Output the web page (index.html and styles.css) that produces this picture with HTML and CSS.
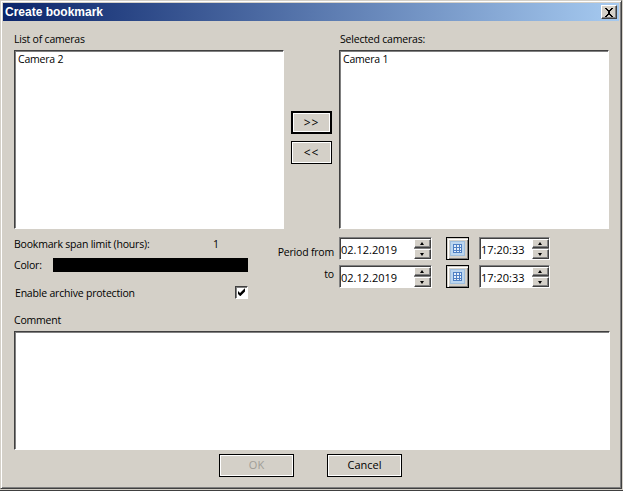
FILE: index.html
```html
<!DOCTYPE html>
<html lang="en">
<head>
<meta charset="utf-8">
<title>Create bookmark</title>
<link rel="stylesheet" href="styles.css">
</head>
<body>
<div class="window">
  <div class="frame">
    <header class="titlebar">
      <span class="title">Create bookmark</span>
      <button class="close" aria-label="Close">
        <svg width="10" height="9" viewBox="0 0 10 9"><path d="M1 0h2v1h1v1h2V1h1V0h2v1H8v1H7v1H6v3h1v1h1v1h1v1H7V8H6V7H4v1H3v1H1V8h1V7h1V6h1V3H3V2H2V1H1z" fill="#000"/></svg>
      </button>
    </header>
    <main class="body">
      <section class="lists">
        <div class="list-col">
          <label class="label">List of cameras</label>
          <div class="listbox">Camera 2</div>
        </div>
        <div class="move-col">
          <button class="btn btn-default move">&gt;&gt;</button>
          <button class="btn move">&lt;&lt;</button>
        </div>
        <div class="list-col">
          <label class="label label-right">Selected cameras:</label>
          <div class="listbox">Camera 1</div>
        </div>
      </section>
      <section class="settings">
        <div class="left-settings">
          <div class="span-row"><span class="span-label">Bookmark span limit (hours):</span><span>1</span></div>
          <div class="color-row"><span class="color-label">Color:</span><div class="swatch"></div></div>
          <div class="protect-row"><span>Enable archive protection</span>
            <span class="check">
              <svg width="9" height="9" viewBox="0 0 9 9"><path d="M1 3l2 2 4.500-4.500h.5v3L3.500 8H3L1 6z" fill="#000"/></svg>
            </span>
          </div>
        </div>
        <div class="period">
          <div class="period-row">
            <span class="period-label from">Period from</span>
            <div class="field date"><span class="val">02.12.2019</span><div class="spin"><i class="up"></i><i class="down"></i></div></div>
            <button class="cal"><svg width="15" height="15" viewBox="0 0 15 15"><rect x=".5" y=".5" width="14" height="14" fill="#bcd6ef" stroke="#9fbfdf"/><rect x="3" y="3" width="9" height="9" fill="#e6f0fb"/><path d="M3.500 3v9M6.500 3v9M9.500 3v9M11.500 3v9M3 3.500h9M3 6.500h9M3 9.500h9M3 11.500h9" stroke="#4f80c4" fill="none"/></svg></button>
            <div class="field time"><span class="val">17:20:33</span><div class="spin"><i class="up"></i><i class="down"></i></div></div>
          </div>
          <div class="period-row">
            <span class="period-label to">to</span>
            <div class="field date"><span class="val">02.12.2019</span><div class="spin"><i class="up"></i><i class="down"></i></div></div>
            <button class="cal"><svg width="15" height="15" viewBox="0 0 15 15"><rect x=".5" y=".5" width="14" height="14" fill="#bcd6ef" stroke="#9fbfdf"/><rect x="3" y="3" width="9" height="9" fill="#e6f0fb"/><path d="M3.500 3v9M6.500 3v9M9.500 3v9M11.500 3v9M3 3.500h9M3 6.500h9M3 9.500h9M3 11.500h9" stroke="#4f80c4" fill="none"/></svg></button>
            <div class="field time"><span class="val">17:20:33</span><div class="spin"><i class="up"></i><i class="down"></i></div></div>
          </div>
        </div>
      </section>
      <section class="comment">
        <label class="label">Comment</label>
        <div class="comment-box"></div>
      </section>
      <footer class="actions">
        <button class="btn action" disabled>OK</button>
        <button class="btn action">Cancel</button>
      </footer>
    </main>
  </div>
</div>
</body>
</html>
```
FILE: styles.css
```css
* { box-sizing: border-box; }
html, body { margin: 0; padding: 0; }
body { width: 623px; height: 491px; overflow: hidden; background: #d4d0c8; font-family: "Open Sans", "Noto Sans", sans-serif; font-size: 10.500px; letter-spacing: -0.2px; color: #000; }
button { font: inherit; color: inherit; padding: 0; margin: 0; }

.window { width: 623px; height: 491px; padding: 0 1px 0 0; background: #d4d0c8; border-bottom: 1px solid #404040; }
.frame { height: 489px; width: 622px; border-style: solid; border-width: 1px; border-color: #d4d0c8 #404040 #404040 #d4d0c8; box-shadow: inset 1px 1px 0 #fff, inset -1px -1px 0 #808080; padding: 2px 2px 0 2px; display: flex; flex-direction: column; }

.titlebar { height: 18px; flex: none; display: flex; align-items: center; justify-content: space-between; padding: 0 2px 0 2px; background: linear-gradient(90deg, #0a246a, #a6caf0); color: #fff; }
.title { font-family: "Liberation Sans", sans-serif; font-weight: 700; font-size: 12px; letter-spacing: 0; }
.close { width: 16px; height: 14px; display: flex; align-items: center; justify-content: center; background: #d4d0c8; border: 1px solid; border-color: #fff #404040 #404040 #fff; box-shadow: inset -1px -1px 0 #808080; }

.body { flex: 1; display: flex; flex-direction: column; padding: 11px 8px 0 11px; }

.lists { display: flex; height: 197px; flex: none; }
.list-col { width: 270px; display: flex; flex-direction: column; }
.label { height: 18px; flex: none; padding-left: 0; line-height: 14px; }
.label-right { padding-left: 1px; }
.listbox { height: 179px; flex: none; background: #fff; border: 1px solid; border-color: #404040 #fff #fff #404040; box-shadow: inset 1px 1px 0 #808080; padding: 1px 3px; line-height: 14px; }
.move-col { width: 55px; display: flex; flex-direction: column; align-items: center; padding-top: 79px; gap: 7px; }

.btn { background: #d4d0c8; border: 1px solid #000; box-shadow: inset 1px 1px 0 #fff, inset -1px -1px 0 #fff; }
.btn-default { border-width: 2px; }
.move { width: 41px; height: 23px; font-size: 12px; letter-spacing: 1px; }

.settings { display: flex; height: 84px; flex: none; padding-top: 8px; }
.left-settings { width: 263px; display: flex; flex-direction: column; }
.span-row { display: flex; height: 14px; line-height: 14px; }
.span-label { width: 199px; }
.color-row { display: flex; align-items: center; height: 14px; margin-top: 7px; line-height: 14px; }
.color-label { width: 39px; }
.swatch { width: 195px; height: 14px; background: #000; }
.protect-row { display: flex; align-items: center; justify-content: space-between; margin-top: 13px; height: 16px; padding: 0 29px 0 1px; }
.check { width: 13px; height: 13px; margin-top: -1px; background: #fff; border: 1px solid; border-color: #404040 #fff #fff #404040; box-shadow: inset 1px 1px 0 #808080; display: flex; align-items: center; justify-content: center; }

.period { display: flex; flex-direction: column; gap: 5px; }
.period-row { display: flex; align-items: center; height: 23px; }
.period-label { width: 62px; text-align: right; padding-right: 5px; flex: none; white-space: nowrap; }
.from { padding-top: 7px; }
.to { margin-top: -6px; }
.field { height: 23px; background: #fff; border: 1px solid; border-color: #808080 #fff #fff #808080; box-shadow: inset 1px 1px 0 #404040; display: flex; align-items: center; justify-content: space-between; padding: 0 0 0 1px; }
.val { font-size: 11px; letter-spacing: 0; padding-top: 2px; }
.date { width: 93px; }
.time { width: 71px; margin-left: 10px; }
.spin { width: 17px; height: 20px; display: flex; flex-direction: column; gap: 1px; background: #808080; }
.spin i { flex: 1; background: #d4d0c8; border: 1px solid; border-color: #fff #404040 #404040 #fff; box-shadow: inset -1px -1px 0 #808080; position: relative; display: block; }
.spin i::after { content: ""; position: absolute; left: 5px; width: 0; height: 0; border-left: 2.500px solid transparent; border-right: 2.500px solid transparent; }
.spin .up::after { top: 2px; border-bottom: 3px solid #000; }
.spin .down::after { top: 3px; border-top: 3px solid #000; }
.cal { width: 23px; height: 23px; margin-left: 14px; background: #d4d0c8; border: 1px solid #000; box-shadow: inset 1px 1px 0 #d4d0c8, inset 2px 2px 0 #fff, inset -1px -1px 0 #808080; display: flex; align-items: center; justify-content: center; }

.comment { display: flex; flex-direction: column; flex: none; }
.comment-box { width: 596px; height: 119px; background: #fff; border: 1px solid; border-color: #404040 #fff #fff #404040; box-shadow: inset 1px 1px 0 #808080; }

.actions { display: flex; gap: 33px; padding: 4px 0 0 205px; }
.action { width: 75px; height: 23px; font-size: 11px; letter-spacing: 0; padding-bottom: 2px; }
.action:disabled { color: #a09d97; }
```
